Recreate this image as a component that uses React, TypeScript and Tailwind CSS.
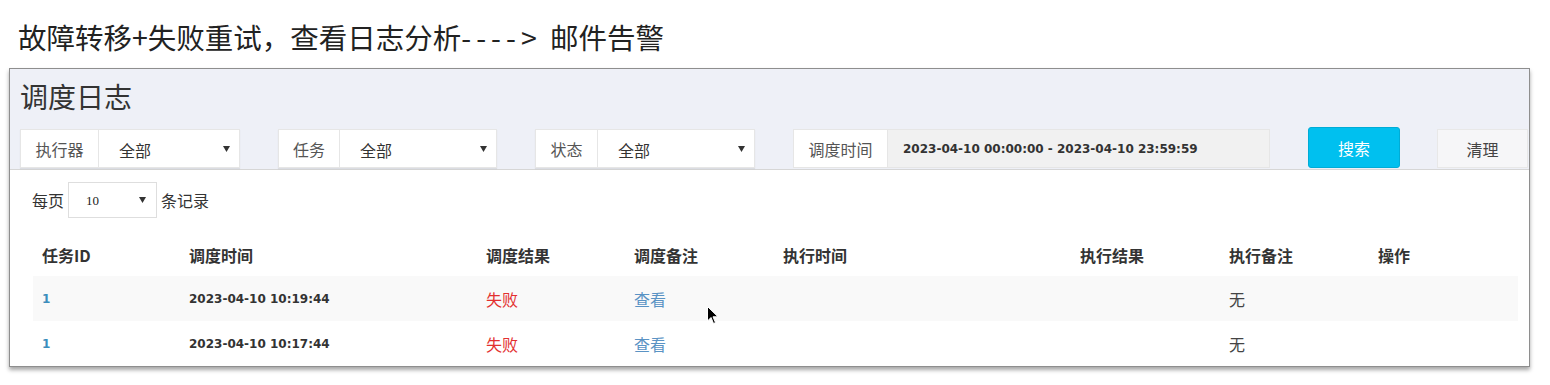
import React from "react";

const CJK = "font-['Noto_Sans_CJK_SC','Noto_Sans',sans-serif]";
const NUM = "font-['DejaVu_Sans','Noto_Sans_CJK_SC',sans-serif]";

function Caret() {
  return (
    <svg width="7" height="6" viewBox="0 0 7 6" className="shrink-0">
      <path d="M0 0 L7 0 L3.5 6 Z" fill="#333" />
    </svg>
  );
}

function SelectGroup({ label, labelW, selectW }: { label: string; labelW: number; selectW: number }) {
  return (
    <div className="flex h-[39px] shadow-[0_1px_1px_rgba(0,0,0,0.08)]">
      <div
        className="flex items-center justify-center bg-white border border-[#e6e6e6] text-[16px] text-[#555]"
        style={{ width: labelW }}
      >
        {label}
      </div>
      <div
        className="flex items-center justify-between bg-white border border-l-0 border-[#e6e6e6] pl-[20px] pr-[9px] text-[16px] text-[#333]"
        style={{ width: selectW }}
      >
        <span className="pt-[3px]">全部</span>
        <Caret />
      </div>
    </div>
  );
}

const cols = [
  { title: "任务ID", w: 147 },
  { title: "调度时间", w: 297 },
  { title: "调度结果", w: 148 },
  { title: "调度备注", w: 149 },
  { title: "执行时间", w: 297 },
  { title: "执行结果", w: 149 },
  { title: "执行备注", w: 149 },
  { title: "操作", w: 149 },
];

function Row({ time, bg }: { time: string; bg: string }) {
  return (
    <div className={`flex items-center h-[45px] ${bg}`}>
      <div className="w-[147px] pl-[9px] text-[12px] font-bold text-[#3c8dbc]">
        <span className={NUM}>1</span>
      </div>
      <div className={`w-[297px] pl-[9px] text-[12px] font-bold text-[#333] ${NUM}`}>{time}</div>
      <div className="w-[148px] pl-[9px] text-[16px] text-[#e3302f]">失败</div>
      <div className="w-[149px] pl-[9px] text-[16px] text-[#5a93c4]">查看</div>
      <div className="w-[297px]" />
      <div className="w-[149px]" />
      <div className="w-[149px] pl-[9px] text-[16px] text-[#444]">无</div>
      <div className="w-[149px]" />
    </div>
  );
}

export default function App() {
  return (
    <div className={`relative w-[1550px] h-[385px] bg-white overflow-hidden ${CJK}`}>
      <div className="h-[68px] pl-[18px] pt-[22px] text-[28.5px] leading-[30px] text-[#222]">
        故障转移+失败重试，查看日志分析<span className="tracking-[5px]">----&gt;</span><span className="ml-[2px]"> 邮件告警</span>
      </div>

      <div className="ml-[9px] w-[1521px] h-[299px] border border-[#8e8e8e] shadow-[0_3px_4px_rgba(0,0,0,0.35)] flex flex-col overflow-hidden">
        <div className="bg-[#eef0f7] h-[101px] border-b border-[#d6d6d6] flex flex-col">
          <div className="pl-[10px] pt-[12px] h-[58px] text-[28px] leading-[30px] text-[#333]">调度日志</div>
          <div className="flex items-end gap-[38px] pl-[10px]">
            <SelectGroup label="执行器" labelW={79} selectW={141} />
            <SelectGroup label="任务" labelW={62} selectW={157} />
            <SelectGroup label="状态" labelW={63} selectW={157} />
            <div className="flex h-[39px]">
              <div className="w-[95px] flex items-center justify-center bg-white border border-[#e6e6e6] text-[16px] text-[#555]">
                调度时间
              </div>
              <div className={`w-[382px] flex items-center pl-[15px] bg-[#f1f1f1] border border-l-0 border-[#e6e6e6] text-[12px] font-bold text-[#333] ${NUM}`}>
                2023-04-10 00:00:00 - 2023-04-10 23:59:59
              </div>
            </div>
            <div className="w-[92px] h-[41px] rounded-[3px] bg-[#00c0ef] border border-[#00acd6] flex items-center justify-center text-[16px] text-white">
              搜索
            </div>
            <div className="w-[91px] h-[39px] -ml-[1px] bg-[#f6f6f8] border border-[#e8e8e8] flex items-center justify-center text-[16px] text-[#444]">
              清理
            </div>
          </div>
        </div>

        <div className="flex-1 bg-white">
          <div className="flex items-center pl-[22px] pt-[12px] h-[48px] text-[16px] text-[#333]">
            <span>每页</span>
            <div className="ml-[4px] w-[89px] h-[36px] border border-[#dedede] flex items-center justify-between pl-[17px] pr-[10px]">
              <span className="font-['Liberation_Serif',serif] text-[13px] text-[#222] pt-[2px]">10</span>
              <Caret />
            </div>
            <span className="ml-[4px]">条记录</span>
          </div>

          <div className="ml-[23px] w-[1485px] mt-[16px]">
            <div className="flex items-center h-[42px]">
              {cols.map((c) => (
                <div
                  key={c.title}
                  className="pl-[9px] text-[16px] font-bold text-[#333]"
                  style={{ width: c.w }}
                >
                  {c.title}
                </div>
              ))}
            </div>
            <Row time="2023-04-10 10:19:44" bg="bg-[#f9f9f9]" />
            <Row time="2023-04-10 10:17:44" bg="bg-white" />
          </div>
        </div>
      </div>

      <svg className="absolute left-[707px] top-[306px]" width="12" height="19" viewBox="0 0 12 19">
        <path d="M0.5 0.5 L0.5 15 L4 11.5 L6.5 17.5 L8.5 16.6 L6 10.8 L11 10.8 Z" fill="#000" stroke="#fff" strokeWidth="1" />
      </svg>
    </div>
  );
}
